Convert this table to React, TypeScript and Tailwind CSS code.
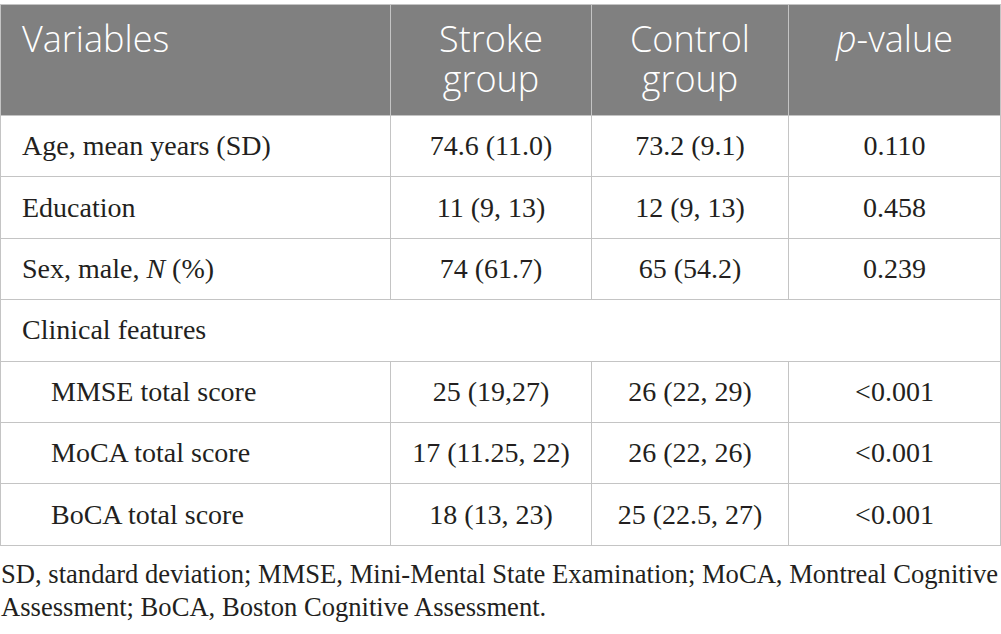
import React from "react";

const serif = { fontFamily: '"Liberation Serif", "Times New Roman", serif' };

type Row = { label: React.ReactNode; a: string; b: string; p: string; indent?: boolean };

const rows: Row[] = [
  { label: "Age, mean years (SD)", a: "74.6 (11.0)", b: "73.2 (9.1)", p: "0.110" },
  { label: "Education", a: "11 (9, 13)", b: "12 (9, 13)", p: "0.458" },
  {
    label: (
      <>
        Sex, male, <i>N</i> (%)
      </>
    ),
    a: "74 (61.7)",
    b: "65 (54.2)",
    p: "0.239",
  },
];

const sub: Row[] = [
  { label: "MMSE total score", a: "25 (19,27)", b: "26 (22, 29)", p: "<0.001", indent: true },
  { label: "MoCA total score", a: "17 (11.25, 22)", b: "26 (22, 26)", p: "<0.001", indent: true },
  { label: "BoCA total score", a: "18 (13, 23)", b: "25 (22.5, 27)", p: "<0.001", indent: true },
];

function BodyRow({ r }: { r: Row }) {
  return (
    <tr className="h-[61.4px]">
      <td className={`border border-[#c4c4c4] ${r.indent ? "pl-[50px]" : "pl-[21px]"} align-middle`}>{r.label}</td>
      <td className="border border-[#c4c4c4] text-center align-middle">{r.a}</td>
      <td className="border border-[#c4c4c4] text-center align-middle">{r.b}</td>
      <td className="border border-[#c4c4c4] text-center align-middle">{r.p}</td>
    </tr>
  );
}

export default function App() {
  return (
    <div className="w-[1001px] h-[634px] bg-white overflow-hidden pt-[4px]">
      <table className="w-[1000px] border-collapse table-fixed text-[28px] text-[#231f20] leading-[32px]" style={serif}>
        <colgroup>
          <col className="w-[390px]" />
          <col className="w-[201px]" />
          <col className="w-[197px]" />
          <col className="w-[212px]" />
        </colgroup>
        <thead>
          <tr
            className="bg-[#808080] text-white text-[36px] leading-[40px] font-light h-[111px]"
            style={{ fontFamily: '"Open Sans", "Noto Sans", sans-serif' }}
          >
            <th className="border border-[#c4c4c4] text-left align-top pl-[21px] pt-[14px] font-light">Variables</th>
            <th className="border border-[#c4c4c4] text-center align-top pt-[14px] font-light">
              Stroke
              <br />
              group
            </th>
            <th className="border border-[#c4c4c4] text-center align-top pt-[14px] font-light">
              Control
              <br />
              group
            </th>
            <th className="border border-[#c4c4c4] text-center align-top pt-[14px] font-light">
              <i>p</i>-value
            </th>
          </tr>
        </thead>
        <tbody>
          {rows.map((r, i) => (
            <BodyRow key={i} r={r} />
          ))}
          <tr className="h-[61.4px]">
            <td colSpan={4} className="border border-[#c4c4c4] pl-[21px] align-middle">
              Clinical features
            </td>
          </tr>
          {sub.map((r, i) => (
            <BodyRow key={i} r={r} />
          ))}
        </tbody>
      </table>
      <p className="text-[26.6px] leading-[33px] text-[#231f20] pt-[12px] pl-[1px] whitespace-nowrap" style={serif}>
        SD, standard deviation; MMSE, Mini-Mental State Examination; MoCA, Montreal Cognitive
        <br />
        Assessment; BoCA, Boston Cognitive Assessment.
      </p>
    </div>
  );
}
